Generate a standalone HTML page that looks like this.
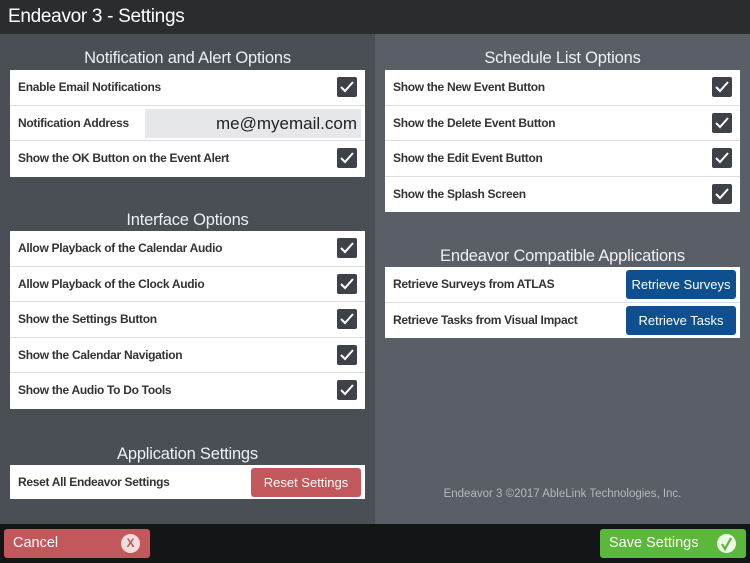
<!DOCTYPE html>
<html><head><meta charset="utf-8"><style>
*{margin:0;padding:0;box-sizing:border-box}
body{width:750px;height:563px;overflow:hidden;font-family:"Liberation Sans",sans-serif;background:#4b4f56;position:relative}
.a{position:absolute}
.hdr{left:0;top:0;width:750px;height:34px;background:#2b2c2e;color:#fff;font-size:19px;padding:6px 0 0 8px;letter-spacing:-0.3px}
.lp{left:0;top:34px;width:375px;height:490px;background:#4a4e55}
.rp{left:375px;top:34px;width:375px;height:490px;background:#5a5e66}
.bot{left:0;top:524px;width:750px;height:39px;background:#141517}
.h{color:#eef0f2;font-size:16.5px;text-align:center;width:355px;letter-spacing:-0.2px}
.card{background:#fff;width:355px}
.row{height:35.6px;border-bottom:1px solid #dcdde0;position:relative;font-size:12px;font-weight:bold;color:#333;padding-left:8px;line-height:35px;letter-spacing:-0.3px}
.row:last-child{border-bottom:none}
.cb{position:absolute;right:8px;top:7px;width:20px;height:20px;background:#3e4248;border-radius:2px}
.cb svg{position:absolute;left:3px;top:4px}
.btn{position:absolute;color:#fff;font-size:13px;text-align:center;border-radius:3px;font-weight:normal;letter-spacing:0}
</style></head><body>
<div class="a hdr">Endeavor 3 - Settings</div>
<div class="a lp"></div><div class="a rp"></div><div class="a bot"></div>

<div class="a h" style="left:10px;top:49px">Notification and Alert Options</div>
<div class="a card" style="left:10px;top:70px">
<div class="row">Enable Email Notifications<div class="cb"><svg width="14" height="12"><path d="M1 6l4 4 8-9" stroke="#fff" stroke-width="2" fill="none"/></svg></div></div>
<div class="row">Notification Address<div class="a" style="left:135px;top:3px;width:216px;height:29px;background:#e6e7e9;font-size:17px;font-weight:normal;color:#222;text-align:right;padding-right:4px;line-height:29px;letter-spacing:0">me@myemail.com</div></div>
<div class="row">Show the OK Button on the Event Alert<div class="cb"><svg width="14" height="12"><path d="M1 6l4 4 8-9" stroke="#fff" stroke-width="2" fill="none"/></svg></div></div>
</div>

<div class="a h" style="left:10px;top:211px">Interface Options</div>
<div class="a card" style="left:10px;top:231px">
<div class="row">Allow Playback of the Calendar Audio<div class="cb"><svg width="14" height="12"><path d="M1 6l4 4 8-9" stroke="#fff" stroke-width="2" fill="none"/></svg></div></div>
<div class="row">Allow Playback of the Clock Audio<div class="cb"><svg width="14" height="12"><path d="M1 6l4 4 8-9" stroke="#fff" stroke-width="2" fill="none"/></svg></div></div>
<div class="row">Show the Settings Button<div class="cb"><svg width="14" height="12"><path d="M1 6l4 4 8-9" stroke="#fff" stroke-width="2" fill="none"/></svg></div></div>
<div class="row">Show the Calendar Navigation<div class="cb"><svg width="14" height="12"><path d="M1 6l4 4 8-9" stroke="#fff" stroke-width="2" fill="none"/></svg></div></div>
<div class="row">Show the Audio To Do Tools<div class="cb"><svg width="14" height="12"><path d="M1 6l4 4 8-9" stroke="#fff" stroke-width="2" fill="none"/></svg></div></div>
</div>

<div class="a h" style="left:10px;top:445px">Application Settings</div>
<div class="a card" style="left:10px;top:465px">
<div class="row" style="height:34px;line-height:34px">Reset All Endeavor Settings<div class="btn" style="left:241px;top:3px;width:110px;height:29px;line-height:29px;background:#c2585b">Reset Settings</div></div>
</div>

<div class="a h" style="left:385px;top:49px">Schedule List Options</div>
<div class="a card" style="left:385px;top:70px">
<div class="row">Show the New Event Button<div class="cb"><svg width="14" height="12"><path d="M1 6l4 4 8-9" stroke="#fff" stroke-width="2" fill="none"/></svg></div></div>
<div class="row">Show the Delete Event Button<div class="cb"><svg width="14" height="12"><path d="M1 6l4 4 8-9" stroke="#fff" stroke-width="2" fill="none"/></svg></div></div>
<div class="row">Show the Edit Event Button<div class="cb"><svg width="14" height="12"><path d="M1 6l4 4 8-9" stroke="#fff" stroke-width="2" fill="none"/></svg></div></div>
<div class="row">Show the Splash Screen<div class="cb"><svg width="14" height="12"><path d="M1 6l4 4 8-9" stroke="#fff" stroke-width="2" fill="none"/></svg></div></div>
</div>

<div class="a h" style="left:385px;top:247px">Endeavor Compatible Applications</div>
<div class="a card" style="left:385px;top:267px">
<div class="row">Retrieve Surveys from ATLAS<div class="btn" style="left:241px;top:3px;width:110px;height:29px;line-height:29px;background:#0e4f8f">Retrieve Surveys</div></div>
<div class="row">Retrieve Tasks from Visual Impact<div class="btn" style="left:241px;top:3px;width:110px;height:29px;line-height:29px;background:#0e4f8f">Retrieve Tasks</div></div>
</div>

<div class="a" style="left:375px;top:488px;width:375px;text-align:center;color:#b4b7bc;font-size:11.5px">Endeavor 3 ©2017 AbleLink Technologies, Inc.</div>

<div class="a" style="left:4px;top:529px;width:146px;height:29px;background:#c2585b;border-radius:3px;color:#fff;font-size:14.5px;line-height:29px;padding-left:9px">Cancel
<div class="a" style="left:117px;top:5px;width:19px;height:19px;border-radius:50%;background:#f3dede;color:#c2585b;font-size:12px;font-weight:bold;line-height:19px;text-align:center;padding:0">X</div></div>
<div class="a" style="left:600px;top:529px;width:146px;height:29px;background:#5cb83a;border-radius:3px;color:#fff;font-size:14.5px;line-height:29px;padding-left:9px">Save Settings
<div class="a" style="left:117px;top:5px;width:19px;height:19px;border-radius:50%;background:#eef8e8;padding:0"><svg width="19" height="19" style="position:absolute;left:0;top:0"><path d="M5 10l3 5 6-11" stroke="#5cb83a" stroke-width="2.2" fill="none"/></svg></div></div>
</body></html>
